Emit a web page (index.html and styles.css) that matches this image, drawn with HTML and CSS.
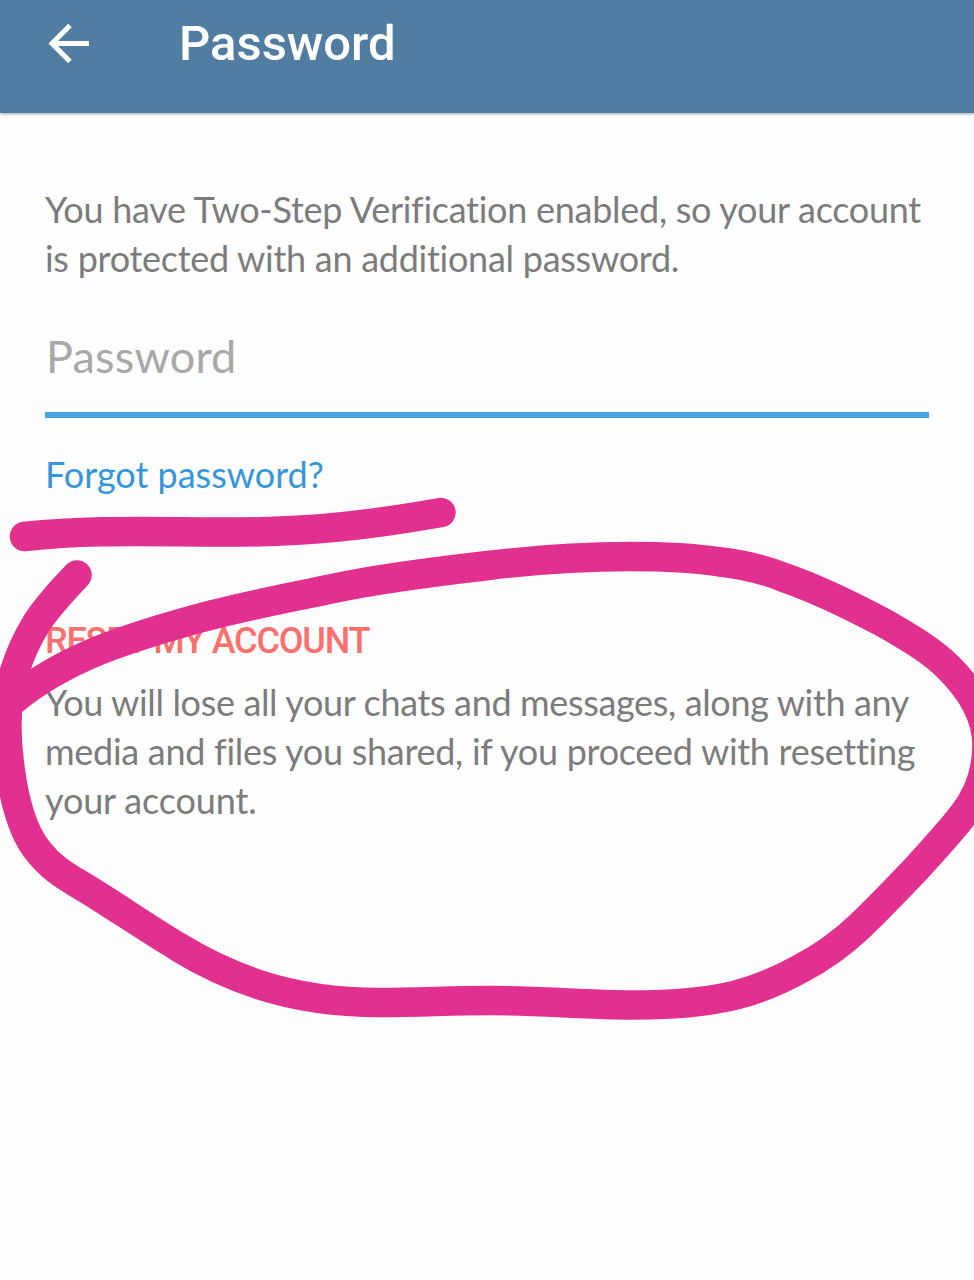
FILE: index.html
```html
<!DOCTYPE html>
<html lang="en">
<head>
<meta charset="UTF-8">
<meta name="viewport" content="width=device-width, initial-scale=1.0">
<title>Password</title>
<link rel="stylesheet" href="styles.css">
</head>
<body>
<header>
  <svg class="back" width="42" height="42" viewBox="0 0 42 42">
    <path d="M41 20.500H5M22 2.500L4 20.500L22 38.500"/>
  </svg>
  <h1>Password</h1>
</header>
<main>
  <p class="info">
    <span class="line l1">You have Two-Step Verification enabled, so your account</span>
    <span class="line l2">is protected with an additional password.</span>
  </p>
  <input type="password" class="field" placeholder="Password">
  <a class="forgot">Forgot password?</a>
  <h2>RESET MY ACCOUNT</h2>
  <p class="info">
    <span class="line l3">You will lose all your chats and messages, along with any</span>
    <span class="line l4">media and files you shared, if you proceed with resetting</span>
    <span class="line l5">your account.</span>
  </p>
</main>
<!-- marker strokes over the page -->
<svg class="marker" width="974" height="1280" viewBox="0 0 974 1280">
  <path d="M24.500 536.500C95 529 150 532 240 532C310 532 370 525 441 512.500"/>
  <path d="M77 575C60 593 46 608 36 624C27 639 20 654 15 670C5 700 6 735 9 760C13 795 21 831 39 852C50 866 62 874 77 883C108 901 140 924 180 948C206 964 230 975 260 985C300 998 340 1002.500 380 1002.500C420 1002.500 450 1000.500 490 1000.500C540 1000.500 585 1005 633 1005C670 1005 703 1003 734 995.500C760 989 780 980 800 969C823 957 842 943 860 926C880 907 898 888 917 868C933 850 950 832 963 815C978 796 987 772 987 745C987 715 970 689 949 668C931 650 908 637 884 623C852 606 820 590 784 577.500C763 569 740 564 717 561.500C688 557 660 556.500 630 556.500C580 556.500 532 560 484 566C432 572 382 578 333 588.500C288 598 244 606 200 618C167 627 133 637 100 650C68 663 38 679 11 702"/>
</svg>
</body>
</html>
```
FILE: styles.css
```css
body {
  font-family: 'Lato', sans-serif;
  background-color: #fefefe;
  margin: 0;
  position: relative;
  height: 1280px;
  overflow: hidden;
}
header {
  display: flex;
  align-items: flex-start;
  background-color: #517da2;
  height: 113px;
  box-shadow: 0 1px 3px rgba(60, 80, 110, 0.5);
}
.back {
  margin: 23px 0 0 48px;
  fill: none;
  stroke: #ffffff;
  stroke-width: 5;
}
h1 {
  font-family: 'Roboto', sans-serif;
  font-weight: 500;
  font-size: 49px;
  line-height: 58px;
  margin: 15px 0 0 89px;
  color: #ffffff;
}
main {
  padding: 72px 45px 0;
}
.info {
  margin: 0;
  font-size: 36px;
  line-height: 49px;
  color: #7c7c7c;
}
.line {
  display: block;
  white-space: nowrap;
}
.l1 {
  letter-spacing: -0.27px;
}
.l2 {
  letter-spacing: -0.27px;
}
.l3 {
  letter-spacing: -0.35px;
}
.l4 {
  letter-spacing: -0.28px;
}
.l5 {
  letter-spacing: -0.15px;
}
.field {
  display: block;
  box-sizing: border-box;
  width: 884px;
  height: 95px;
  margin-top: 40px;
  padding: 0 1px 24px;
  border: 0;
  border-bottom: 6px solid #45a5e4;
  background: none;
  font-family: 'Lato', sans-serif;
  font-size: 45px;
  letter-spacing: 0.2px;
}
.field::placeholder {
  color: #a8a8a8;
  opacity: 1;
}
.forgot {
  display: block;
  margin-top: 32px;
  font-size: 36px;
  line-height: 49px;
  color: #3596db;
}
h2 {
  font-family: 'Roboto', sans-serif;
  font-weight: 500;
  font-size: 36px;
  letter-spacing: -1.2px;
  line-height: 44px;
  margin: 120px 0 15px;
  color: #fa706c;
}
.marker {
  position: absolute;
  top: 0;
  left: 0;
  fill: none;
  stroke: #e13090;
  stroke-width: 29.5;
  stroke-linecap: round;
  stroke-linejoin: round;
}
```
